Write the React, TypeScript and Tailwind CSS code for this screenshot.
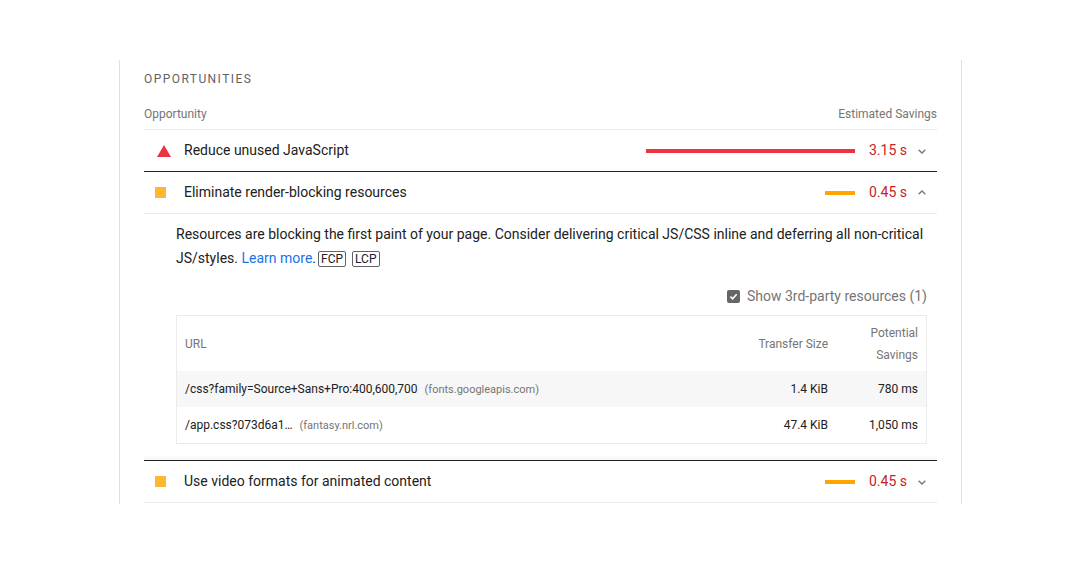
import React from "react";

const Chevron = ({ up }: { up?: boolean }) => (
  <svg viewBox="0 0 24 24" className="w-4 h-4 text-[#757575]" fill="none" stroke="currentColor" strokeWidth="2">
    <path d={up ? "M7 14l5-5 5 5" : "M7 10l5 5 5-5"} />
  </svg>
);

function Row({ icon, title, bar, barColor, value, up, bottom }: { icon: "tri" | "sq"; title: string; bar: number; barColor: string; value: string; up?: boolean; bottom: string }) {
  return (
    <div className={`flex items-center h-[42px] border-b ${bottom}`}>
      <div className="w-[40px] flex justify-center">
        {icon === "tri" ? (
          <svg width="14" height="12" viewBox="0 0 14 12"><path d="M7 0L14 12H0z" fill="#eb3341" /></svg>
        ) : (
          <div className="w-[11px] h-[11px] bg-[#ffa400] opacity-80 -ml-2" />
        )}
      </div>
      <div className="flex-1 text-[14px] text-[#212121]">{title}</div>
      <div className="h-[4px]" style={{ width: bar, background: barColor }} />
      <div className="w-[52px] text-right text-[14px] text-[#c7221f]">{value}</div>
      <div className="w-[30px] flex justify-end pr-[7px]"><Chevron up={up} /></div>
    </div>
  );
}

export default function App() {
  return (
    <div className="bg-white w-[1080px] h-[567px] pt-[60px] font-[Roboto,sans-serif]">
      <div className="ml-[119px] w-[843px] h-[444px] border-x border-[#e0e0e0] px-[24px]">
        <div className="pt-[10px] text-[12px] tracking-[0.12em] text-[#5f6368] h-[40px]">OPPORTUNITIES</div>
        <div className="flex justify-between text-[12px] text-[#757575] h-[30px] pt-[5px] border-b border-[#ebebeb]">
          <span>Opportunity</span>
          <span>Estimated Savings</span>
        </div>
        <Row icon="tri" title="Reduce unused JavaScript" bar={209} barColor="#eb3341" value="3.15 s" bottom="border-[#212121]" />
        <Row icon="sq" title="Eliminate render-blocking resources" bar={30} barColor="#ffa400" value="0.45 s" up bottom="border-[#ebebeb]" />
        <div className="pl-[32px] pr-[10px] pb-[16px]">
          <p className="pt-[8px] text-[14px] leading-[24px] text-[#212121]">
            Resources are blocking the first paint of your page. Consider delivering critical JS/CSS inline and deferring all non-critical JS/styles.{" "}
            <span className="text-[#1a73e8]">Learn more</span>.
            <span className="ml-[2px] inline-block border border-[#5f6368] rounded-[2px] px-[2px] text-[12px] leading-[14px]">FCP</span>
            <span className="ml-[6px] inline-block border border-[#5f6368] rounded-[2px] px-[2px] text-[12px] leading-[14px]">LCP</span>
          </p>
          <div className="flex justify-end items-center gap-[7px] h-[28px] mt-[12px] mb-[5px] text-[14px] text-[#757575]">
            <div className="w-[13px] h-[13px] rounded-[2px] bg-[#666] flex items-center justify-center">
              <svg width="9" height="9" viewBox="0 0 10 10"><path d="M1.5 5l2.5 2.5 4.5-5" stroke="white" strokeWidth="1.8" fill="none" /></svg>
            </div>
            Show 3rd-party resources (1)
          </div>
          <div className="border border-[#ebebeb] text-[12px] text-[#212121]">
            <div className="flex items-center h-[55px] text-[#757575]">
              <div className="flex-1 pl-[8px]">URL</div>
              <div className="w-[120px] text-right">Transfer Size</div>
              <div className="w-[98px] text-right pr-[8px] leading-[22px]">Potential<br />Savings</div>
            </div>
            <div className="flex items-center h-[36px] bg-[#f7f7f7]">
              <div className="flex-1 pl-[8px]">/css?family=Source+Sans+Pro:400,600,700 <span className="ml-[4px] text-[11px] text-[#757575]">(fonts.googleapis.com)</span></div>
              <div className="w-[120px] text-right">1.4 KiB</div>
              <div className="w-[98px] text-right pr-[8px]">780 ms</div>
            </div>
            <div className="flex items-center h-[36px]">
              <div className="flex-1 pl-[8px]">/app.css?073d6a1… <span className="ml-[4px] text-[11px] text-[#757575]">(fantasy.nrl.com)</span></div>
              <div className="w-[120px] text-right">47.4 KiB</div>
              <div className="w-[98px] text-right pr-[8px]">1,050 ms</div>
            </div>
          </div>
        </div>
        <div className="border-t border-[#212121] shadow-[0_-2px_3px_rgba(0,0,0,0.12)]" />
        <Row icon="sq" title="Use video formats for animated content" bar={30} barColor="#ffa400" value="0.45 s" bottom="border-[#ebebeb]" />
      </div>
    </div>
  );
}
